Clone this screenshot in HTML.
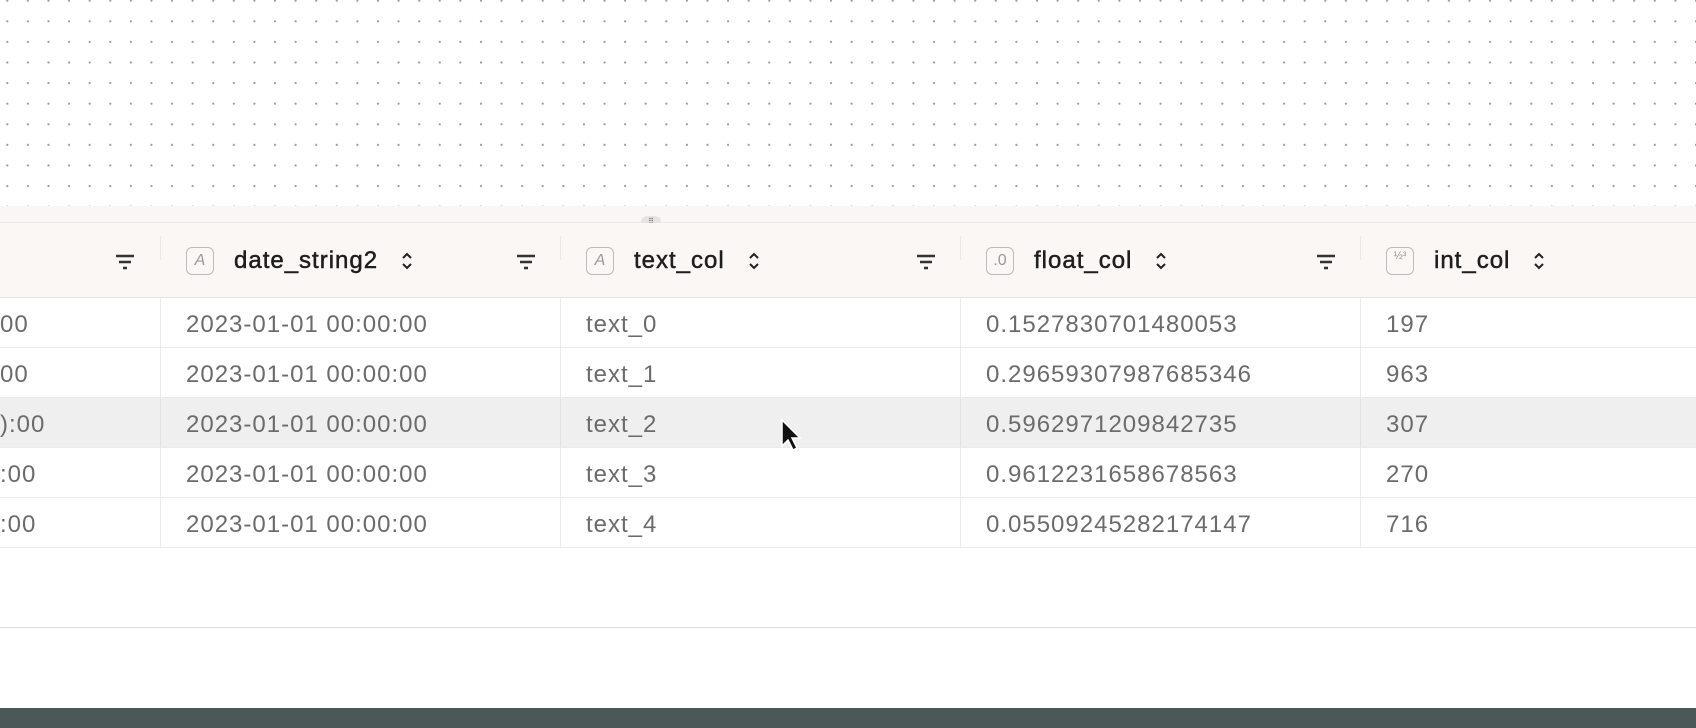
<!DOCTYPE html>
<html><head><style>
body{margin:0;width:1696px;height:728px;overflow:hidden;background:#fff;font-family:"Liberation Sans",sans-serif;position:relative}
.grid{position:absolute;left:0;top:0;width:1696px;height:214px;background-image:radial-gradient(circle,#9a9a9a 0.9px,transparent 1.3px);background-size:20.6px 20.6px;background-position:-3px 11px}
.band{position:absolute;left:0;top:206px;width:1696px;height:16px;background:#f9f7f6;border-bottom:1px solid #ece8e6}
.handle{position:absolute;left:641px;top:216px;width:20px;height:12px;border-radius:6px;background:#e6e3e1;font-size:8px;color:#555;text-align:center;line-height:12px}
.head{position:absolute;left:0;top:223px;width:1696px;height:74px;background:#faf7f5;border-bottom:1px solid #e8e4e2}
.row{position:absolute;left:0;width:1696px;height:49px;border-bottom:1px solid #ebebeb}
.sep{position:absolute;top:0;bottom:0;width:1px;background:#ebebeb}
.hsep{position:absolute;top:13px;height:24px;width:1px;background:#ebe7e4}
.cell{position:absolute;top:2px;line-height:49px;font-size:24px;letter-spacing:1px;color:#6b6b6b}
.htext{position:absolute;top:25px;font-size:24px;letter-spacing:1px;color:#1e1e1e;line-height:26px;-webkit-text-stroke:0.5px #1e1e1e;display:flex;align-items:center;white-space:nowrap}
.htext svg{position:static;margin-left:22px}
.ic{position:absolute;top:24px;width:28px;height:28px;border:1.5px solid #bcbcbc;border-radius:6px;box-sizing:border-box;color:#999;font-size:16px;text-align:center;line-height:25px}
svg{position:absolute}
</style></head><body>
<div class="grid"></div>
<div class="band"></div>
<div class="handle">⠿</div>
<div class="head">
 <svg style="left:114px;top:30px" width="22" height="18" viewBox="0 0 22 18"><path d="M2 3h18M5 9h12M9 15h4" stroke="#333" stroke-width="2.4"/></svg>
 <div class="hsep" style="left:160px"></div>
 <div class="ic" style="left:186px"><i>A</i></div>
 <div class="htext" style="left:234px">date_string2<svg width="14" height="20" viewBox="0 0 14 20"><path d="M3 7l4-4 4 4M3 13l4 4 4-4" stroke="#222" stroke-width="2" fill="none"/></svg></div>
 <svg style="left:515px;top:30px" width="22" height="18" viewBox="0 0 22 18"><path d="M2 3h18M5 9h12M9 15h4" stroke="#333" stroke-width="2.4"/></svg>
 <div class="hsep" style="left:560px"></div>
 <div class="ic" style="left:586px"><i>A</i></div>
 <div class="htext" style="left:634px">text_col<svg width="14" height="20" viewBox="0 0 14 20"><path d="M3 7l4-4 4 4M3 13l4 4 4-4" stroke="#222" stroke-width="2" fill="none"/></svg></div>
 <svg style="left:915px;top:30px" width="22" height="18" viewBox="0 0 22 18"><path d="M2 3h18M5 9h12M9 15h4" stroke="#333" stroke-width="2.4"/></svg>
 <div class="hsep" style="left:960px"></div>
 <div class="ic" style="left:986px">.0</div>
 <div class="htext" style="left:1034px">float_col<svg width="14" height="20" viewBox="0 0 14 20"><path d="M3 7l4-4 4 4M3 13l4 4 4-4" stroke="#222" stroke-width="2" fill="none"/></svg></div>
 <svg style="left:1315px;top:30px" width="22" height="18" viewBox="0 0 22 18"><path d="M2 3h18M5 9h12M9 15h4" stroke="#333" stroke-width="2.4"/></svg>
 <div class="hsep" style="left:1360px"></div>
 <div class="ic" style="left:1386px;font-size:11px;line-height:12px;padding-top:2px">½³</div>
 <div class="htext" style="left:1434px">int_col<svg width="14" height="20" viewBox="0 0 14 20"><path d="M3 7l4-4 4 4M3 13l4 4 4-4" stroke="#222" stroke-width="2" fill="none"/></svg></div>
</div>

<div class="row" style="top:298px"><div class="sep" style="left:160px"></div><div class="sep" style="left:560px"></div><div class="sep" style="left:960px"></div><div class="sep" style="left:1360px"></div>
<div class="cell" style="left:0">00</div><div class="cell" style="left:186px">2023-01-01 00:00:00</div><div class="cell" style="left:586px">text_0</div><div class="cell" style="left:986px">0.1527830701480053</div><div class="cell" style="left:1386px">197</div></div>
<div class="row" style="top:348px"><div class="sep" style="left:160px"></div><div class="sep" style="left:560px"></div><div class="sep" style="left:960px"></div><div class="sep" style="left:1360px"></div>
<div class="cell" style="left:0">00</div><div class="cell" style="left:186px">2023-01-01 00:00:00</div><div class="cell" style="left:586px">text_1</div><div class="cell" style="left:986px">0.29659307987685346</div><div class="cell" style="left:1386px">963</div></div>
<div class="row" style="top:398px;background:#efefef"><div class="sep" style="left:160px;background:#e2e2e2"></div><div class="sep" style="left:560px;background:#e2e2e2"></div><div class="sep" style="left:960px;background:#e2e2e2"></div><div class="sep" style="left:1360px;background:#e2e2e2"></div>
<div class="cell" style="left:0">):00</div><div class="cell" style="left:186px">2023-01-01 00:00:00</div><div class="cell" style="left:586px">text_2</div><div class="cell" style="left:986px">0.5962971209842735</div><div class="cell" style="left:1386px">307</div></div>
<div class="row" style="top:448px"><div class="sep" style="left:160px"></div><div class="sep" style="left:560px"></div><div class="sep" style="left:960px"></div><div class="sep" style="left:1360px"></div>
<div class="cell" style="left:0">:00</div><div class="cell" style="left:186px">2023-01-01 00:00:00</div><div class="cell" style="left:586px">text_3</div><div class="cell" style="left:986px">0.9612231658678563</div><div class="cell" style="left:1386px">270</div></div>
<div class="row" style="top:498px"><div class="sep" style="left:160px"></div><div class="sep" style="left:560px"></div><div class="sep" style="left:960px"></div><div class="sep" style="left:1360px"></div>
<div class="cell" style="left:0">:00</div><div class="cell" style="left:186px">2023-01-01 00:00:00</div><div class="cell" style="left:586px">text_4</div><div class="cell" style="left:986px">0.05509245282174147</div><div class="cell" style="left:1386px">716</div></div>

<div style="position:absolute;left:0;top:627px;width:1696px;height:1px;background:#dedede"></div>
<div style="position:absolute;left:0;top:708px;width:1696px;height:20px;background:#4b5858"></div>
<svg style="left:780px;top:418px" width="24" height="34" viewBox="0 0 24 34"><path d="M2 2v26l6-6 5 10 4-2-5-10h8z" fill="#111" stroke="#fff" stroke-width="1.5"/></svg>
</body></html>
